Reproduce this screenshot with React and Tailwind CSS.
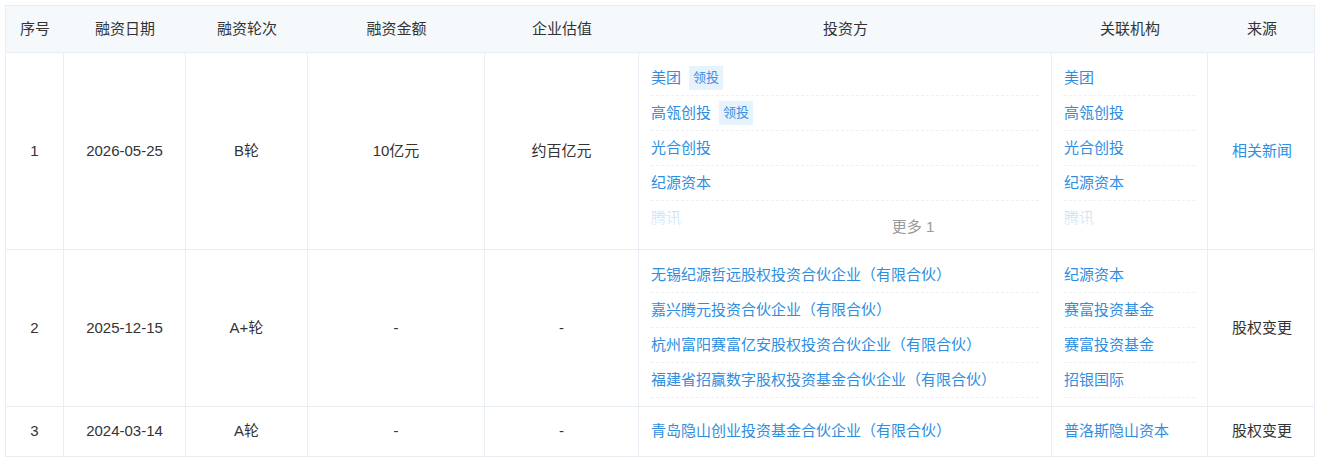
import React from "react";

const font = { fontFamily: '"Liberation Sans", "Noto Sans CJK SC", sans-serif' };
const cols = "grid grid-cols-[58px_122px_122px_177px_154px_413px_156px_108px]";
const cell = "flex items-center justify-center border-r border-[#e8eef3] last:border-r-0";

const Tag = () => (
  <span className="ml-2 px-1 py-[2px] bg-[#e6f2fc] text-[#3b8fdf] text-[13px]">领投</span>
);

const List = ({ items, more, lead }) => (
  <div className="relative w-full self-stretch overflow-hidden px-3 pt-2">
    {items.map((t, i) => (
      <div key={i} className="h-[35px] flex items-center border-b border-dashed border-[#eef1f4] text-[#2f8ee0]">
        {t}
        {lead && i < 2 && <Tag />}
      </div>
    ))}
    {more && (
      <div className="absolute left-[136px] right-0 bottom-0 h-[44px] bg-gradient-to-b from-white/70 to-white flex items-center justify-center text-[#999]">
        {more}
      </div>
    )}
    {more && <div className="absolute left-0 w-[136px] bottom-0 h-[44px] bg-gradient-to-b from-white/70 to-white" />}
    {!more && items.length > 4 && (
      <div className="absolute left-0 right-0 bottom-0 h-[44px] bg-gradient-to-b from-white/70 to-white" />
    )}
  </div>
);

export default function App() {
  const heads = ["序号", "融资日期", "融资轮次", "融资金额", "企业估值", "投资方", "关联机构", "来源"];
  const r1 = ["美团", "高瓴创投", "光合创投", "纪源资本", "腾讯"];
  return (
    <div className="bg-white w-[1320px] h-[458px] pt-[5px] pl-[5px] text-[15px] text-[#333]" style={font}>
      <div className="w-[1310px] border border-[#e8eef3]">
        <div className={`${cols} h-[47px] bg-[#f5f9fc] border-b border-[#e8eef3]`}>
          {heads.map((h) => (
            <div key={h} className="flex items-center justify-center">{h}</div>
          ))}
        </div>
        <div className={`${cols} h-[197px] border-b border-[#e8eef3]`}>
          <div className={cell}>1</div>
          <div className={cell}>2026-05-25</div>
          <div className={cell}>B轮</div>
          <div className={cell}>10亿元</div>
          <div className={cell}>约百亿元</div>
          <div className={`${cell} items-start`}><List items={r1} more="更多 1" lead /></div>
          <div className={`${cell} items-start`}><List items={r1} /></div>
          <div className={`${cell} text-[#2f8ee0]`}>相关新闻</div>
        </div>
        <div className={`${cols} h-[157px] border-b border-[#e8eef3]`}>
          <div className={cell}>2</div>
          <div className={cell}>2025-12-15</div>
          <div className={cell}>A+轮</div>
          <div className={cell}>-</div>
          <div className={cell}>-</div>
          <div className={`${cell} items-start`}>
            <List items={["无锡纪源哲远股权投资合伙企业（有限合伙）", "嘉兴腾元投资合伙企业（有限合伙）", "杭州富阳赛富亿安股权投资合伙企业（有限合伙）", "福建省招赢数字股权投资基金合伙企业（有限合伙）"]} />
          </div>
          <div className={`${cell} items-start`}>
            <List items={["纪源资本", "赛富投资基金", "赛富投资基金", "招银国际"]} />
          </div>
          <div className={cell}>股权变更</div>
        </div>
        <div className={`${cols} h-[49px]`}>
          <div className={cell}>3</div>
          <div className={cell}>2024-03-14</div>
          <div className={cell}>A轮</div>
          <div className={cell}>-</div>
          <div className={cell}>-</div>
          <div className={`${cell} justify-start px-3 text-[#2f8ee0]`}>青岛隐山创业投资基金合伙企业（有限合伙）</div>
          <div className={`${cell} justify-start px-3 text-[#2f8ee0]`}>普洛斯隐山资本</div>
          <div className={cell}>股权变更</div>
        </div>
      </div>
    </div>
  );
}
